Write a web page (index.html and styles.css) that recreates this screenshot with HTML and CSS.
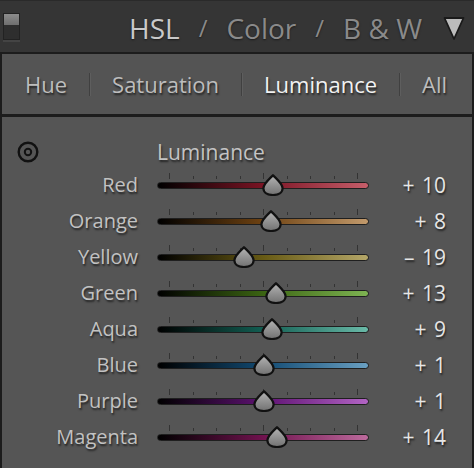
FILE: index.html
```html
<!DOCTYPE html>
<html>
  <head>
    <meta charset="utf-8">
    <title>HSL</title>
    <link rel="stylesheet" href="styles.css">
  </head>
  <body>
    <svg class="defs" width="0" height="0">
      <defs>
        <linearGradient id="thumb-fill" x1="0" y1="0" x2="0" y2="1">
          <stop offset="0" stop-color="#b4b4b4"/>
          <stop offset="1" stop-color="#717171"/>
        </linearGradient>
      </defs>
    </svg>
    <div class="hsl">
      <div class="hsl__head">
        <span class="hsl__switch"></span>
        <div class="hsl__modes">
          <span class="hsl__mode hsl__mode--active">HSL</span>
          <span class="hsl__slash">/</span>
          <span class="hsl__mode">Color</span>
          <span class="hsl__slash">/</span>
          <span class="hsl__mode">B &amp; W</span>
          <svg class="hsl__toggle" width="22" height="26" viewBox="0 0 22 26">
            <path d="M1.5 3 L20.5 3 L11 24 Z" fill="#bcbcbc" stroke="#1a1a1a" stroke-width="1.8" stroke-linejoin="round"/>
          </svg>
        </div>
      </div>

      <div class="tabs">
        <span class="tabs__item">Hue</span>
        <span class="tabs__sep"></span>
        <span class="tabs__item">Saturation</span>
        <span class="tabs__sep"></span>
        <span class="tabs__item tabs__item--active">Luminance</span>
        <span class="tabs__sep"></span>
        <span class="tabs__item">All</span>
      </div>

      <div class="panel">
        <div class="panel__title">
          <svg class="panel__target" width="24" height="24" viewBox="0 0 24 24">
            <circle cx="12" cy="12" r="9.3" fill="none" stroke="#111" stroke-width="2.4"/>
            <circle cx="12" cy="12" r="3.2" fill="none" stroke="#111" stroke-width="2"/>
          </svg>
          <span class="panel__name">Luminance</span>
        </div>

        <div class="row">
          <span class="row__label">Red</span>
          <div class="slider">
            <div class="slider__ticks"><i class="tall"></i><i></i><i></i><i></i><i class="tall"></i><i></i><i></i><i></i><i class="tall"></i></div>
            <div class="slider__track slider__track--red"></div>
            <svg class="slider__thumb" style="left: 105px" width="22" height="22" viewBox="0 0 22 22"><path d="M11 1.2 C13.5 4 20.6 9.5 20.6 14.3 C20.6 18.6 16.4 21 11 21 C5.6 21 1.4 18.6 1.4 14.3 C1.4 9.5 8.5 4 11 1.2 Z"/></svg>
          </div>
          <span class="row__value">+ 10</span>
        </div>

        <div class="row">
          <span class="row__label">Orange</span>
          <div class="slider">
            <div class="slider__ticks"><i class="tall"></i><i></i><i></i><i></i><i class="tall"></i><i></i><i></i><i></i><i class="tall"></i></div>
            <div class="slider__track slider__track--orange"></div>
            <svg class="slider__thumb" style="left: 103px" width="22" height="22" viewBox="0 0 22 22"><path d="M11 1.2 C13.5 4 20.6 9.5 20.6 14.3 C20.6 18.6 16.4 21 11 21 C5.6 21 1.4 18.6 1.4 14.3 C1.4 9.5 8.5 4 11 1.2 Z"/></svg>
          </div>
          <span class="row__value">+ 8</span>
        </div>

        <div class="row">
          <span class="row__label">Yellow</span>
          <div class="slider">
            <div class="slider__ticks"><i class="tall"></i><i></i><i></i><i></i><i class="tall"></i><i></i><i></i><i></i><i class="tall"></i></div>
            <div class="slider__track slider__track--yellow"></div>
            <svg class="slider__thumb" style="left: 76px" width="22" height="22" viewBox="0 0 22 22"><path d="M11 1.2 C13.5 4 20.6 9.5 20.6 14.3 C20.6 18.6 16.4 21 11 21 C5.6 21 1.4 18.6 1.4 14.3 C1.4 9.5 8.5 4 11 1.2 Z"/></svg>
          </div>
          <span class="row__value">– 19</span>
        </div>

        <div class="row">
          <span class="row__label">Green</span>
          <div class="slider">
            <div class="slider__ticks"><i class="tall"></i><i></i><i></i><i></i><i class="tall"></i><i></i><i></i><i></i><i class="tall"></i></div>
            <div class="slider__track slider__track--green"></div>
            <svg class="slider__thumb" style="left: 108px" width="22" height="22" viewBox="0 0 22 22"><path d="M11 1.2 C13.5 4 20.6 9.5 20.6 14.3 C20.6 18.6 16.4 21 11 21 C5.6 21 1.4 18.6 1.4 14.3 C1.4 9.5 8.5 4 11 1.2 Z"/></svg>
          </div>
          <span class="row__value">+ 13</span>
        </div>

        <div class="row">
          <span class="row__label">Aqua</span>
          <div class="slider">
            <div class="slider__ticks"><i class="tall"></i><i></i><i></i><i></i><i class="tall"></i><i></i><i></i><i></i><i class="tall"></i></div>
            <div class="slider__track slider__track--aqua"></div>
            <svg class="slider__thumb" style="left: 104px" width="22" height="22" viewBox="0 0 22 22"><path d="M11 1.2 C13.5 4 20.6 9.5 20.6 14.3 C20.6 18.6 16.4 21 11 21 C5.6 21 1.4 18.6 1.4 14.3 C1.4 9.5 8.5 4 11 1.2 Z"/></svg>
          </div>
          <span class="row__value">+ 9</span>
        </div>

        <div class="row">
          <span class="row__label">Blue</span>
          <div class="slider">
            <div class="slider__ticks"><i class="tall"></i><i></i><i></i><i></i><i class="tall"></i><i></i><i></i><i></i><i class="tall"></i></div>
            <div class="slider__track slider__track--blue"></div>
            <svg class="slider__thumb" style="left: 96px" width="22" height="22" viewBox="0 0 22 22"><path d="M11 1.2 C13.5 4 20.6 9.5 20.6 14.3 C20.6 18.6 16.4 21 11 21 C5.6 21 1.4 18.6 1.4 14.3 C1.4 9.5 8.5 4 11 1.2 Z"/></svg>
          </div>
          <span class="row__value">+ 1</span>
        </div>

        <div class="row">
          <span class="row__label">Purple</span>
          <div class="slider">
            <div class="slider__ticks"><i class="tall"></i><i></i><i></i><i></i><i class="tall"></i><i></i><i></i><i></i><i class="tall"></i></div>
            <div class="slider__track slider__track--purple"></div>
            <svg class="slider__thumb" style="left: 96px" width="22" height="22" viewBox="0 0 22 22"><path d="M11 1.2 C13.5 4 20.6 9.5 20.6 14.3 C20.6 18.6 16.4 21 11 21 C5.6 21 1.4 18.6 1.4 14.3 C1.4 9.5 8.5 4 11 1.2 Z"/></svg>
          </div>
          <span class="row__value">+ 1</span>
        </div>

        <div class="row">
          <span class="row__label">Magenta</span>
          <div class="slider">
            <div class="slider__ticks"><i class="tall"></i><i></i><i></i><i></i><i class="tall"></i><i></i><i></i><i></i><i class="tall"></i></div>
            <div class="slider__track slider__track--magenta"></div>
            <svg class="slider__thumb" style="left: 109px" width="22" height="22" viewBox="0 0 22 22"><path d="M11 1.2 C13.5 4 20.6 9.5 20.6 14.3 C20.6 18.6 16.4 21 11 21 C5.6 21 1.4 18.6 1.4 14.3 C1.4 9.5 8.5 4 11 1.2 Z"/></svg>
          </div>
          <span class="row__value">+ 14</span>
        </div>
      </div>
    </div>
  </body>
</html>
```

FILE: styles.css
```css
body {
    margin: 0;
    background: #1c1c1c;
    font-family: "Open Sans", "Noto Sans", sans-serif;
}

.defs {
    position: absolute;
}

.hsl {
    width: 474px;
    height: 468px;
    display: flex;
    flex-direction: column;
    background: #1c1c1c;
    overflow: hidden;
}

.hsl__head {
    height: 52px;
    display: flex;
    align-items: center;
    justify-content: space-between;
    background: #353535;
    border-top: 1px solid #2a2a2a;
    box-sizing: border-box;
}
.hsl__switch {
    width: 17px;
    height: 27px;
    margin-left: 3px;
    box-sizing: border-box;
    border: 1px solid #222;
    background: linear-gradient(#8c8c8c, #6e6e6e 45%, #2e2e2e 46%, #2e2e2e);
    box-shadow: 0 2px 0 #444;
}
.hsl__modes {
    display: flex;
    align-items: center;
    gap: 19px;
    padding-right: 9px;
    padding-top: 2px;
    font-size: 28px;
    color: #8a8a8a;
    text-shadow: 0 1px 2px rgba(0, 0, 0, 0.5);
}
.hsl__mode--active {
    color: #c9c9c9;
}
.hsl__slash {
    font-size: 24px;
}
.hsl__toggle {
    margin-left: 2px;
}

.tabs {
    height: 60px;
    margin: 2px 2px 0;
    display: flex;
    align-items: center;
    gap: 22px;
    padding-left: 23px;
    background: #545454;
    font-size: 22px;
    color: #bdbdbd;
    text-shadow: 1px 2px 2px rgba(0, 0, 0, 0.6);
}
.tabs__item--active {
    color: #f2f2f2;
}
.tabs__sep {
    width: 1px;
    height: 23px;
    background: #404040;
    box-shadow: 1px 0 0 #5e5e5e;
}

.panel {
    flex: 1;
    margin: 3px 2px 0;
    padding-top: 20px;
    background: #555;
}
.panel__title {
    height: 30px;
    display: grid;
    grid-template-columns: 136px 1fr;
    column-gap: 19px;
    align-items: center;
}
.panel__target {
    margin-left: 14px;
}
.panel__name {
    font-size: 21px;
    color: #c4c4c4;
    text-shadow: 1px 2px 2px rgba(0, 0, 0, 0.6);
}

.row {
    height: 36px;
    display: grid;
    grid-template-columns: 136px 212px 1fr;
    column-gap: 19px;
    padding-right: 26px;
    line-height: 36px;
    font-size: 20px;
    text-shadow: 1px 2px 2px rgba(0, 0, 0, 0.6);
}
.row__label {
    text-align: right;
    color: #c2c2c2;
}
.row__value {
    text-align: right;
    font-size: 21px;
    word-spacing: 2px;
    color: #e6e6e6;
}

.slider {
    position: relative;
}
.slider__ticks {
    position: absolute;
    left: 12px;
    right: 11px;
    top: 6px;
    height: 6px;
    display: flex;
    justify-content: space-between;
    align-items: flex-end;
}
.slider__ticks i {
    width: 1px;
    height: 3px;
    background: #333;
}
.slider__ticks i.tall {
    height: 6px;
}
.slider__track {
    height: 7px;
    margin-top: 15px;
    box-sizing: border-box;
    border: 1.5px solid #1f1f1f;
    border-radius: 4px;
}
.slider__track--red { background: linear-gradient(to right, #000, #7a1424 50%, #c65e6a); }
.slider__track--orange { background: linear-gradient(to right, #000, #6e4212 50%, #c29a6c); }
.slider__track--yellow { background: linear-gradient(to right, #000, #675a14 50%, #b4a668); }
.slider__track--green { background: linear-gradient(to right, #000, #3b6412 50%, #7eb452); }
.slider__track--aqua { background: linear-gradient(to right, #000, #125e52 50%, #6abaa8); }
.slider__track--blue { background: linear-gradient(to right, #000, #124a72 50%, #6aa0c2); }
.slider__track--purple { background: linear-gradient(to right, #000, #5e1272 50%, #b264c4); }
.slider__track--magenta { background: linear-gradient(to right, #000, #70124e 50%, #bc6a9c); }

.slider__thumb {
    position: absolute;
    top: 7px;
}
.slider__thumb path {
    fill: url(#thumb-fill);
    stroke: #111;
    stroke-width: 2.2;
    stroke-linejoin: round;
}
```
